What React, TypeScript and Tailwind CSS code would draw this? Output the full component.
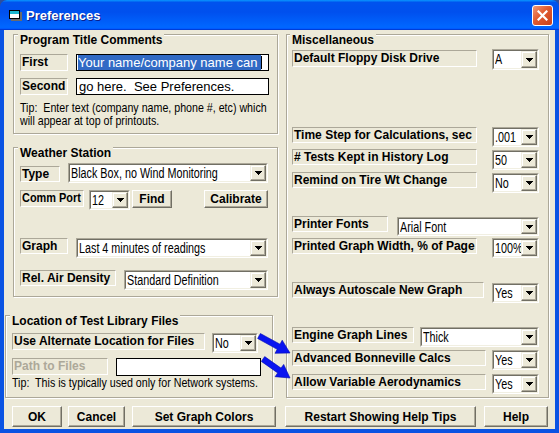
import React from "react";

function N({ children }: { children: React.ReactNode }) {
  return <span className="inline-block origin-left [transform:scaleX(0.82)] whitespace-pre">{children}</span>;
}

function Label({ cls, children, disabled }: { cls: string; children: React.ReactNode; disabled?: boolean }) {
  return (
    <div
      className={`shrink-0 border border-t-[#aca899] border-l-[#aca899] border-b-white border-r-white pl-[1px] text-[12px] font-bold leading-[14px] whitespace-nowrap overflow-hidden ${
        disabled ? "text-[#aca899]" : "text-black"
      } ${cls}`}
    >
      {children}
    </div>
  );
}

function Combo({ cls, value }: { cls: string; value: string }) {
  return (
    <div className={`flex shrink-0 border border-t-[#aca899] border-l-[#aca899] border-b-white border-r-white ${cls}`}>
      <div className="flex flex-1 min-w-0 bg-white border border-t-[#716f64] border-l-[#716f64] border-b-[#f1efe2] border-r-[#f1efe2]">
        <div className="flex-1 min-w-0 overflow-hidden whitespace-nowrap pl-[1px] text-[14px] leading-[17px]">
          <span className="inline-block origin-left [transform:scaleX(0.77)] whitespace-pre">{value}</span>
        </div>
        <div className="w-[16px] shrink-0 flex items-center justify-center bg-[#ece9d8] border border-t-[#f1efe2] border-l-[#f1efe2] border-b-[#716f64] border-r-[#716f64] shadow-[inset_-1px_-1px_0_#aca899,inset_1px_1px_0_#fff]">
          <svg width="7" height="4" viewBox="0 0 7 4" shapeRendering="crispEdges">
            <path d="M0 0H7V1H6V2H5V3H4V4H3V3H2V2H1V1H0Z" fill="#000" />
          </svg>
        </div>
      </div>
    </div>
  );
}

function Btn({ cls, children }: { cls: string; children: React.ReactNode }) {
  return (
    <div
      className={`flex shrink-0 items-center justify-center bg-[#ece9d8] border border-t-white border-l-white border-b-[#716f64] border-r-[#716f64] shadow-[inset_-1px_-1px_0_#aca899] text-[12px] font-bold leading-none whitespace-nowrap ${cls}`}
    >
      {children}
    </div>
  );
}

function Group({ cls, title, titleCls, children }: { cls: string; title: string; titleCls: string; children: React.ReactNode }) {
  return (
    <div className={`flex flex-col shrink-0 border border-[#aca899] shadow-[inset_1px_1px_0_#fff,1px_1px_0_#fff] ${cls}`}>
      <div className={`-mt-[2px] px-[2px] w-fit bg-[#ece9d8] text-[12px] font-bold leading-[14px] whitespace-nowrap ${titleCls}`}>{title}</div>
      {children}
    </div>
  );
}

function arrowPts(tx: number, ty: number, px: number, py: number) {
  const dx = px - tx;
  const dy = py - ty;
  const L = Math.hypot(dx, dy);
  const ux = dx / L;
  const uy = dy / L;
  const nx = -uy;
  const ny = ux;
  const hw = 2.9;
  const hh = 7.5;
  const hl = 13;
  const bx = px - ux * hl;
  const by = py - uy * hl;
  const pts = [
    [tx + nx * hw, ty + ny * hw],
    [bx + nx * hw, by + ny * hw],
    [bx + nx * hh, by + ny * hh],
    [px, py],
    [bx - nx * hh, by - ny * hh],
    [bx - nx * hw, by - ny * hw],
    [tx - nx * hw, ty - ny * hw],
  ];
  return pts.map((p) => `${p[0].toFixed(1)},${p[1].toFixed(1)}`).join(" ");
}

function TitleBar() {
  return (
    <div className="h-[30px] shrink-0 flex items-start rounded-t-[7px] bg-[linear-gradient(180deg,#0997ff,#0053ee_8%,#0050ee_40%,#0066ff_88%,#0066ff_93%,#005bff_95%,#003dd7_96%,#003dd7)]">
      <svg className="ml-[8px] mt-[9px] shrink-0" width="15" height="13" viewBox="0 0 15 13" shapeRendering="crispEdges">
        <rect x="3" y="3" width="11" height="9" fill="#6b6b6b" />
        <rect x="1" y="1" width="11" height="9" fill="#000" />
        <rect x="2" y="2" width="9" height="7" fill="#fff" />
        <rect x="2" y="2" width="9" height="3" fill="#1cb8d0" />
      </svg>
      <div className="ml-[3px] mt-[8px] text-white text-[13px] font-bold leading-[16px] [text-shadow:1px_1px_0_#0a1e8c]">Preferences</div>
      <div className="ml-auto mt-[5px] mr-[6px] w-[21px] h-[21px] rounded-[3px] border border-white bg-[linear-gradient(135deg,#f29a78,#e05a30_45%,#c9401b)] flex items-center justify-center">
        <svg width="11" height="11" viewBox="0 0 11 11">
          <path d="M1.5 1.5L9.5 9.5M9.5 1.5L1.5 9.5" stroke="#fff" strokeWidth="2.2" strokeLinecap="square" />
        </svg>
      </div>
    </div>
  );
}

export default function App() {
  const rightRow = (mt: string, label: string, labelCls: string, comboCls: string, value: string) => (
    <div className={`flex items-start h-[20px] ${mt}`}>
      <Label cls={`ml-[5px] h-[16px] ${labelCls}`}>{label}</Label>
      <Combo cls={comboCls} value={value} />
    </div>
  );

  return (
    <div className="w-[559px] h-[433px] bg-[#2d4f9e]">
      <div className="relative w-[559px] h-[433px] flex flex-col rounded-t-[7px] overflow-hidden bg-[#0a53e3] font-['Liberation_Sans',Arial,sans-serif] text-black">
        <TitleBar />
        <div className="flex flex-col mx-[4px] h-[399px] bg-[#ece9d8]">
          <div className="flex">
            {/* Left column */}
            <div className="flex flex-col w-[274px] shrink-0">
              <Group cls="ml-[9px] mt-[4px] w-[265px] h-[100px]" title="Program Title Comments" titleCls="ml-[4px]">
                <div className="flex mt-[7px] h-[17px]">
                  <Label cls="ml-[6px] w-[48px] h-[17px]">First</Label>
                  <div className="ml-[8px] w-[193px] h-[17px] bg-white border border-black overflow-hidden whitespace-pre text-[13px] leading-[15px] pl-[1px]">
                    <span className="bg-[#316ac5] text-white">Your name/company name can </span>
                    <span className="inline-block w-[1px] h-[13px] bg-black align-[-2px]" />
                  </div>
                </div>
                <div className="flex mt-[7px] h-[17px]">
                  <Label cls="ml-[6px] w-[48px] h-[17px]">Second</Label>
                  <div className="ml-[8px] w-[193px] h-[17px] bg-white border border-black overflow-hidden whitespace-pre text-[13px] leading-[15px] pl-[2px]">
                    go here.  See Preferences.
                  </div>
                </div>
                <div className="ml-[6px] mt-[6px] text-[13px] leading-[13px]">
                  <N>{"Tip:  Enter text (company name, phone #, etc) which\nwill appear at top of printouts."}</N>
                </div>
              </Group>

              <Group cls="ml-[9px] mt-[13px] w-[265px] h-[150px]" title="Weather Station" titleCls="ml-[4px]">
                <div className="flex items-start mt-[3px] h-[20px]">
                  <Label cls="ml-[6px] mt-[3px] w-[40px] h-[16px]">Type</Label>
                  <Combo cls="ml-[8px] w-[200px] h-[20px]" value="Black Box, no Wind Monitoring" />
                </div>
                <div className="flex items-start mt-[7px] h-[20px]">
                  <Label cls="ml-[6px] w-[64px] h-[17px]">
                    <span className="inline-block origin-left [transform:scaleX(0.91)]">Comm Port</span>
                  </Label>
                  <Combo cls="ml-[5px] w-[41px] h-[20px]" value="12" />
                  <Btn cls="ml-[2px] w-[40px] h-[18px]">Find</Btn>
                  <Btn cls="ml-[32px] w-[64px] h-[18px]">Calibrate</Btn>
                </div>
                <div className="flex items-start mt-[28px] h-[20px]">
                  <Label cls="ml-[6px] w-[48px] h-[16px]">Graph</Label>
                  <Combo cls="ml-[8px] w-[192px] h-[20px]" value="Last 4 minutes of readings" />
                </div>
                <div className="flex items-start mt-[12px] h-[20px]">
                  <Label cls="ml-[6px] w-[96px] h-[16px]">Rel. Air Density</Label>
                  <Combo cls="ml-[8px] w-[144px] h-[20px]" value="Standard Definition" />
                </div>
              </Group>

              <Group cls="ml-[1px] mt-[18px] w-[268px] h-[83px]" title="Location of Test Library Files" titleCls="ml-[4px]">
                <div className="flex items-start mt-[5px] h-[20px]">
                  <Label cls="ml-[6px] w-[193px] h-[17px]">Use Alternate Location for Files</Label>
                  <Combo cls="ml-[7px] w-[46px] h-[20px]" value="No" />
                </div>
                <div className="flex items-start mt-[5px] h-[18px]">
                  <Label cls="ml-[6px] w-[96px] h-[17px]" disabled>
                    Path to Files
                  </Label>
                  <div className="ml-[8px] w-[145px] h-[18px] bg-white border border-black" />
                </div>
                <div className="ml-[6px] mt-[0px] text-[13px] leading-[13px]">
                  <N>Tip:  This is typically used only for Network systems.</N>
                </div>
              </Group>
            </div>

            {/* Right column */}
            <Group cls="ml-[8px] mt-[4px] w-[263px] h-[364px]" title="Miscellaneous" titleCls="ml-[3px]">
              <div className="flex items-start mt-[2px] h-[21px]">
                <Label cls="ml-[5px] mt-[1px] w-[185px] h-[17px]">Default Floppy Disk Drive</Label>
                <Combo cls="ml-[15px] w-[47px] h-[21px]" value="A" />
              </div>
              {rightRow("mt-[57px]", "Time Step for Calculations, sec", "w-[185px]", "ml-[15px] w-[47px] h-[20px]", ".001")}
              {rightRow("mt-[2px]", "# Tests Kept in History Log", "w-[185px]", "ml-[15px] mt-[1px] w-[47px] h-[20px]", "50")}
              {rightRow("mt-[3px]", "Remind on Tire Wt Change", "w-[185px]", "ml-[15px] mt-[1px] w-[47px] h-[20px]", "No")}
              {rightRow("mt-[24px]", "Printer Fonts", "w-[96px]", "ml-[9px] mt-[1px] w-[142px] h-[19px]", "Arial Font")}
              {rightRow("mt-[2px]", "Printed Graph Width, % of Page", "w-[185px]", "ml-[15px] w-[47px] h-[20px]", "100%")}
              {rightRow("mt-[24px]", "Always Autoscale New Graph", "w-[192px]", "ml-[8px] mt-[1px] w-[47px] h-[20px]", "Yes")}
              {rightRow("mt-[25px]", "Engine Graph Lines", "w-[122px]", "ml-[6px] w-[119px] h-[20px]", "Thick")}
              {rightRow("mt-[3px]", "Advanced Bonneville Calcs", "w-[194px]", "ml-[6px] w-[47px] h-[20px]", "Yes")}
              {rightRow("mt-[4px]", "Allow Variable Aerodynamics", "w-[194px]", "ml-[6px] w-[47px] h-[20px]", "Yes")}
            </Group>
          </div>

          {/* Button row */}
          <div className="flex mt-[8px]">
            <Btn cls="ml-[8px] w-[50px] h-[21px]">OK</Btn>
            <Btn cls="ml-[6px] w-[57px] h-[21px]">Cancel</Btn>
            <Btn cls="ml-[7px] w-[144px] h-[21px]">Set Graph Colors</Btn>
            <Btn cls="ml-[9px] w-[191px] h-[21px]">Restart Showing Help Tips</Btn>
            <Btn cls="ml-[8px] w-[64px] h-[21px]">Help</Btn>
          </div>
        </div>

        <svg className="absolute left-0 top-0 pointer-events-none" width="559" height="433" viewBox="0 0 559 433">
          <polygon points={arrowPts(259, 336, 290, 353)} fill="#0a14f0" stroke="#0008b0" strokeWidth="0.6" />
          <polygon points={arrowPts(263, 359, 290, 378)} fill="#0a14f0" stroke="#0008b0" strokeWidth="0.6" />
        </svg>
      </div>
    </div>
  );
}
